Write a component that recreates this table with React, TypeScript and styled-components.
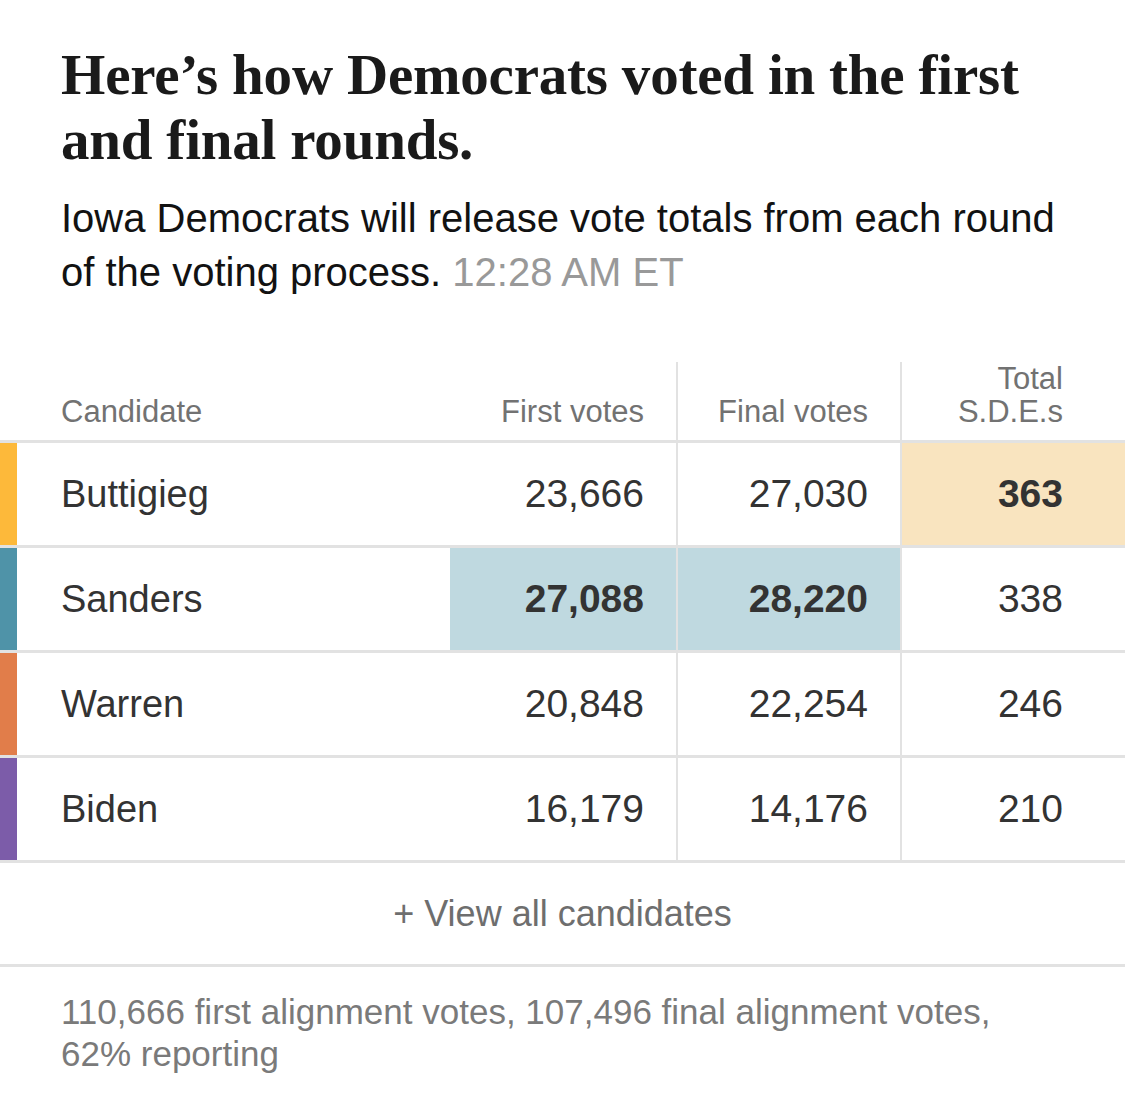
import styled, { createGlobalStyle } from "styled-components";

const GlobalStyle = createGlobalStyle`
  html, body {
    margin: 0;
    padding: 0;
    background: #fff;
  }
  body {
    font-family: "Liberation Sans", Arial, sans-serif;
    color: #121212;
  }
`;

const Page = styled.div`
  width: 1125px;
  padding-top: 42px;
`;

const Heading = styled.div`
  padding: 0 61px;
`;

const Title = styled.h1`
  margin: 0;
  font-family: "Liberation Serif", "Times New Roman", serif;
  font-weight: 700;
  font-size: 57px;
  line-height: 65px;
  color: #1a1a1a;
  letter-spacing: -0.2px;
`;

const Subtitle = styled.p`
  margin: 19px 0 0;
  font-size: 40px;
  line-height: 54px;
  color: #121212;
`;

const Timestamp = styled.span`
  color: #999;
`;

const Table = styled.div`
  margin-top: 60px;
`;

const Row = styled.div<{ $header?: boolean }>`
  display: grid;
  grid-template-columns: 17px 433px 226px 224px 225px;
  height: ${(p) => (p.$header ? "81px" : "102px")};
  border-bottom: 3px solid #e2e2e2;
`;

const Bar = styled.div<{ $color?: string }>`
  background: ${(p) => p.$color || "transparent"};
`;

const HeadCell = styled.div<{ $right?: boolean; $divider?: boolean; $last?: boolean }>`
  display: flex;
  align-items: flex-end;
  justify-content: ${(p) => (p.$right ? "flex-end" : "flex-start")};
  text-align: ${(p) => (p.$right ? "right" : "left")};
  padding: 0 ${(p) => (p.$last ? "62px" : "32px")} 15px ${(p) => (p.$right ? "0" : "44px")};
  border-left: ${(p) => (p.$divider ? "2px solid #e2e2e2" : "none")};
  margin-top: ${(p) => (p.$divider ? "3px" : "0")};
  font-size: 31px;
  line-height: 33px;
  color: #727272;
`;

const NameCell = styled.div`
  display: flex;
  align-items: center;
  padding-left: 44px;
  font-size: 38px;
  color: #333;
`;

const NumCell = styled.div<{ $divider?: boolean; $last?: boolean; $fill?: string; $bold?: boolean }>`
  display: flex;
  align-items: center;
  justify-content: flex-end;
  padding-right: ${(p) => (p.$last ? "62px" : "32px")};
  border-left: ${(p) => (p.$divider ? "2px solid #e2e2e2" : "none")};
  background: ${(p) => p.$fill || "transparent"};
  font-size: 39px;
  font-weight: ${(p) => (p.$bold ? 700 : 400)};
  color: #333;
`;

const ViewAll = styled.div`
  height: 101px;
  display: flex;
  align-items: center;
  justify-content: center;
  border-bottom: 3px solid #e2e2e2;
  font-size: 36px;
  color: #6e6e6e;
`;

const Footer = styled.p`
  margin: 0;
  padding: 24px 61px 0;
  max-width: 960px;
  font-size: 35px;
  line-height: 42px;
  color: #7a7a7a;
`;

type Candidate = {
  name: string;
  color: string;
  first: string;
  final: string;
  sdes: string;
  leadFirst?: boolean;
  leadFinal?: boolean;
  leadSde?: boolean;
};

const candidates: Candidate[] = [
  { name: "Buttigieg", color: "#fdb93a", first: "23,666", final: "27,030", sdes: "363", leadSde: true },
  { name: "Sanders", color: "#4f93a8", first: "27,088", final: "28,220", sdes: "338", leadFirst: true, leadFinal: true },
  { name: "Warren", color: "#e17d4a", first: "20,848", final: "22,254", sdes: "246" },
  { name: "Biden", color: "#7c5ca9", first: "16,179", final: "14,176", sdes: "210" },
];

const BLUE = "#bfd9e0";
const CREAM = "#f9e4bf";

export default function App() {
  return (
    <Page>
      <GlobalStyle />
      <Heading>
        <Title>Here’s how Democrats voted in the first and final rounds.</Title>
        <Subtitle>
          Iowa Democrats will release vote totals from each round of the voting process.{" "}
          <Timestamp>12:28 AM ET</Timestamp>
        </Subtitle>
      </Heading>

      <Table>
        <Row $header>
          <Bar />
          <HeadCell>Candidate</HeadCell>
          <HeadCell $right>First votes</HeadCell>
          <HeadCell $right $divider>Final votes</HeadCell>
          <HeadCell $right $divider $last>
            Total
            <br />
            S.D.E.s
          </HeadCell>
        </Row>
        {candidates.map((c) => (
          <Row key={c.name}>
            <Bar $color={c.color} />
            <NameCell>{c.name}</NameCell>
            <NumCell $fill={c.leadFirst ? BLUE : undefined} $bold={c.leadFirst}>
              {c.first}
            </NumCell>
            <NumCell $divider $fill={c.leadFinal ? BLUE : undefined} $bold={c.leadFinal}>
              {c.final}
            </NumCell>
            <NumCell $divider $last $fill={c.leadSde ? CREAM : undefined} $bold={c.leadSde}>
              {c.sdes}
            </NumCell>
          </Row>
        ))}
        <ViewAll>+ View all candidates</ViewAll>
      </Table>

      <Footer>110,666 first alignment votes, 107,496 final alignment votes, 62% reporting</Footer>
    </Page>
  );
}
